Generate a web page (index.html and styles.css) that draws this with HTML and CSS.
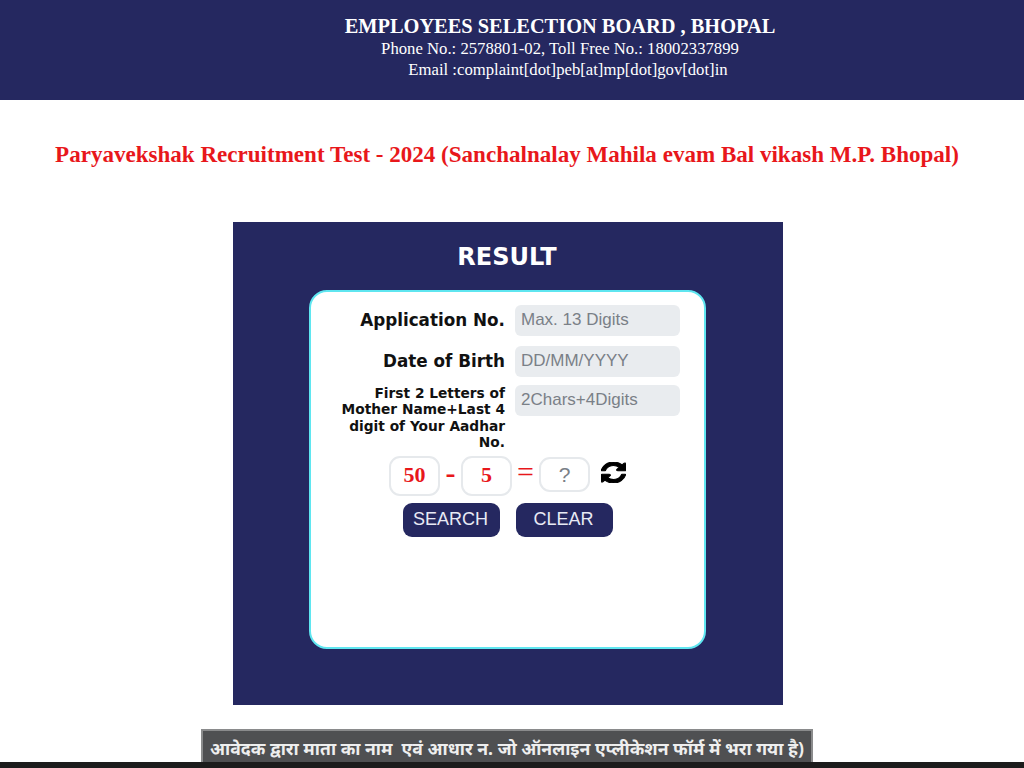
FILE: index.html
```html
<!DOCTYPE html>
<html lang="en">

<head>
    <meta charset="UTF-8">
    <title>Employees Selection Board, Bhopal</title>
    <link rel="stylesheet" href="styles.css">
</head>

<body>
    <header class="header">
        <div class="header-title">EMPLOYEES SELECTION BOARD , BHOPAL</div>
        <div class="header-line">Phone No.: 2578801-02, Toll Free No.: 18002337899</div>
        <div class="header-line header-email">Email :complaint[dot]peb[at]mp[dot]gov[dot]in</div>
    </header>

    <h1 class="exam-title">Paryavekshak Recruitment Test - 2024 (Sanchalnalay Mahila evam Bal vikash M.P. Bhopal)</h1>

    <main class="result-panel">
        <h2 class="result-title">RESULT</h2>
        <form class="result-card">
            <div class="form-row">
                <label class="form-label">Application No.</label>
                <input class="form-input" type="text" placeholder="Max. 13 Digits">
            </div>
            <div class="form-row form-row-dob">
                <label class="form-label">Date of Birth</label>
                <input class="form-input" type="text" placeholder="DD/MM/YYYY">
            </div>
            <div class="form-row form-row-small">
                <label class="form-label form-label-small">First 2 Letters of Mother Name+Last 4 digit of Your Aadhar No.</label>
                <input class="form-input" type="text" placeholder="2Chars+4Digits">
            </div>
            <div class="captcha">
                <span class="captcha-box">50</span>
                <span class="captcha-sign">-</span>
                <span class="captcha-box">5</span>
                <span class="captcha-equals">=</span>
                <input class="captcha-answer" type="text" placeholder="?">
                <svg class="refresh-icon" viewBox="0 0 1536 1536" preserveAspectRatio="none" aria-hidden="true">
                    <path fill="#000" stroke="#000" stroke-width="70" d="M1511 928q0 5-1 7-64 268-268 434.500T764 1536q-146 0-282.500-55T238 1324l-129 129q-19 19-45 19t-45-19-19-45V960q0-26 19-45t45-19h448q26 0 45 19t19 45-19 45l-137 137q71 66 161 102t187 36q134 0 250-65t186-179q11-17 53-117 8-23 30-23h192q13 0 22.500 9.500t9.500 22.500zm25-800v448q0 26-19 45t-45 19h-448q-26 0-45-19t-19-45 19-45l138-138Q969 256 768 256q-134 0-250 65T332 500q-11 17-53 117-8 23-30 23H50q-13 0-22.500-9.500T18 608v-7q65-268 270-434.500T768 0q146 0 284 55.500T1297 212l130-129q19-19 45-19t45 19 19 45z"/>
                </svg>
            </div>
            <div class="button-row">
                <button class="form-button" type="button">SEARCH</button>
                <button class="form-button" type="button">CLEAR</button>
            </div>
        </form>
    </main>

    <div class="notice">आवेदक द्वारा माता का नाम &nbsp;एवं आधार न. जो ऑनलाइन एप्लीकेशन फॉर्म में भरा गया है)</div>
    <div class="bottom-bar"></div>
</body>

</html>
```

FILE: styles.css
```css
html, body {
    height: 768px;
    overflow: hidden;
}

body {
    margin: 0;
    background-color: #fff;
    font-family: "Liberation Sans", Arial, sans-serif;
    display: flex;
    flex-direction: column;
}

.header {
    height: 100px;
    box-sizing: border-box;
    padding: 15px 0 0 96px;
    background-color: #252860;
    color: #fff;
    text-align: center;
    font-family: "Liberation Serif", "Times New Roman", serif;
}

.header-title {
    font-size: 20.4px;
    font-weight: bold;
    line-height: 23px;
}

.header-line {
    font-size: 16.7px;
    line-height: 21px;
}

.header-email {
    padding-left: 16px;
}

.exam-title {
    margin: 41px 0 0;
    padding-right: 10px;
    color: #e8171b;
    font-family: "Liberation Serif", "Times New Roman", serif;
    font-size: 23.05px;
    font-weight: bold;
    line-height: 27px;
    text-align: center;
}

.result-panel {
    width: 550px;
    height: 484px;
    box-sizing: border-box;
    margin: 54px 0 0 233px;
    padding-top: 20px;
    background-color: #252860;
}

.result-title {
    margin: 0 0 18px;
    padding-right: 2px;
    color: #fff;
    font-family: "DejaVu Sans", Verdana, sans-serif;
    font-size: 24px;
    font-weight: bold;
    line-height: 30px;
    text-align: center;
}

.result-card {
    width: 397px;
    height: 359px;
    box-sizing: border-box;
    margin-left: 76px;
    padding: 13px 24px 0 0;
    background-color: #fff;
    border: 2px solid #5fe6f0;
    border-radius: 18px;
}

.form-row {
    display: flex;
    justify-content: flex-end;
    align-items: center;
    gap: 10px;
    margin-bottom: 10px;
}

.form-row-dob {
    margin-bottom: 8px;
}

.form-row-small {
    align-items: flex-start;
    margin-bottom: 0;
}

.form-label {
    color: #111;
    font-family: "DejaVu Sans", Verdana, sans-serif;
    font-size: 16.8px;
    font-weight: bold;
    text-align: right;
}

.form-label-small {
    width: 170px;
    font-size: 13.75px;
    line-height: 16.5px;
}

.form-input {
    width: 165px;
    height: 31px;
    box-sizing: border-box;
    padding: 0 6px;
    background-color: #e9ecef;
    border: none;
    border-radius: 6px;
    font-family: "Liberation Sans", Arial, sans-serif;
    font-size: 17px;
}

.form-input::placeholder,
.captcha-answer::placeholder {
    color: #7a8087;
    opacity: 1;
}

.captcha {
    display: flex;
    align-items: center;
    height: 42px;
    margin: 4px 0 0 78px;
}

.captcha-box {
    width: 51px;
    height: 40px;
    box-sizing: border-box;
    border: 2px solid #e6e9ec;
    border-radius: 11px;
    color: #e8171b;
    font-family: "Liberation Serif", "Times New Roman", serif;
    font-size: 22px;
    font-weight: bold;
    line-height: 33px;
    text-align: center;
}

.captcha-sign {
    width: 21px;
    margin-top: -5px;
    color: #e8171b;
    font-family: "Liberation Serif", "Times New Roman", serif;
    font-size: 30px;
    font-weight: bold;
    line-height: 36px;
    text-align: center;
}

.captcha-equals {
    width: 27px;
    margin-top: -8px;
    color: #e8171b;
    font-family: "Liberation Serif", "Times New Roman", serif;
    font-size: 30px;
    text-align: center;
}

.captcha-answer {
    width: 51px;
    height: 35px;
    box-sizing: border-box;
    margin-top: -2px;
    padding: 0;
    border: 2px solid #e6e9ec;
    border-radius: 11px;
    font-family: "Liberation Sans", Arial, sans-serif;
    font-size: 21px;
    text-align: center;
}

.refresh-icon {
    width: 25px;
    height: 21px;
    margin: -6px 0 0 11px;
}

.button-row {
    display: flex;
    gap: 16px;
    margin: 6px 0 0 92px;
}

.form-button {
    width: 97px;
    height: 34px;
    padding: 0 2px 0 0;
    background-color: #252860;
    border: none;
    border-radius: 9px;
    color: #e8eaf5;
    font-family: "Liberation Sans", Arial, sans-serif;
    font-size: 18px;
}

.notice {
    width: 612px;
    height: 33px;
    box-sizing: border-box;
    margin: 24px 0 0 201px;
    background-color: #4f5052;
    border: 2px solid #8a8b8c;
    border-bottom: none;
    color: #eee;
    font-family: "Noto Sans", "Noto Sans Devanagari", sans-serif;
    font-size: 17.6px;
    font-weight: bold;
    line-height: 34px;
    text-align: center;
    white-space: nowrap;
    overflow: hidden;
}

.bottom-bar {
    height: 6px;
    flex-shrink: 0;
    background-color: #1c1c1c;
}
```
